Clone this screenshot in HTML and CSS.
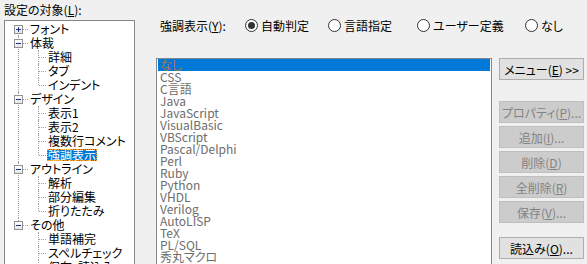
FILE: index.html
```html
<!DOCTYPE html>
<html lang="ja">
<head>
  <meta charset="UTF-8" />
  <title>強調表示</title>
  <link rel="stylesheet" href="styles.css">
</head>
<body>
  <div class="dialog">
    <!-- 左側: 設定の対象ツリー -->
    <div class="targets">
      <div class="caption">設定の対象(<u>L</u>):</div>
      <div class="tree-box">
        <ul class="tree">
          <li class="node first"><div class="row"><span class="toggle plus"></span><span class="label">フォント</span></div></li>
          <li class="node">
            <div class="row"><span class="toggle"></span><span class="label">体裁</span></div>
            <ul class="leaves">
              <li><span class="label">詳細</span></li>
              <li><span class="label">タブ</span></li>
              <li class="last"><span class="label">インデント</span></li>
            </ul>
          </li>
          <li class="node">
            <div class="row"><span class="toggle"></span><span class="label">デザイン</span></div>
            <ul class="leaves">
              <li><span class="label">表示1</span></li>
              <li><span class="label">表示2</span></li>
              <li><span class="label">複数行コメント</span></li>
              <li class="last"><span class="label selected">強調表示</span></li>
            </ul>
          </li>
          <li class="node">
            <div class="row"><span class="toggle"></span><span class="label">アウトライン</span></div>
            <ul class="leaves">
              <li><span class="label">解析</span></li>
              <li><span class="label">部分編集</span></li>
              <li class="last"><span class="label">折りたたみ</span></li>
            </ul>
          </li>
          <li class="node last">
            <div class="row"><span class="toggle"></span><span class="label">その他</span></div>
            <ul class="leaves">
              <li><span class="label">単語補完</span></li>
              <li><span class="label">スペルチェック</span></li>
              <li class="last"><span class="label">保存・読込み</span></li>
            </ul>
          </li>
        </ul>
      </div>
    </div>

    <!-- 右側: 強調表示の設定 -->
    <div class="settings">
      <div class="mode-row">
        <span class="mode-caption">強調表示(<u>Y</u>):</span>
        <label class="radio"><span class="dot checked"></span>自動判定</label>
        <label class="radio"><span class="dot"></span>言語指定</label>
        <label class="radio"><span class="dot"></span>ユーザー定義</label>
        <label class="radio"><span class="dot"></span>なし</label>
      </div>

      <div class="lang-row">
        <ul class="lang-list">
          <li class="selected">なし</li>
          <li>CSS</li>
          <li>C言語</li>
          <li>Java</li>
          <li>JavaScript</li>
          <li>VisualBasic</li>
          <li>VBScript</li>
          <li>Pascal/Delphi</li>
          <li>Perl</li>
          <li>Ruby</li>
          <li>Python</li>
          <li>VHDL</li>
          <li>Verilog</li>
          <li>AutoLISP</li>
          <li>TeX</li>
          <li>PL/SQL</li>
          <li>秀丸マクロ</li>
          <li>HTML</li>
        </ul>

        <div class="buttons">
          <button class="btn menu">メニュー(<u>E</u>) &gt;&gt;</button>
          <button class="btn" disabled>プロパティ(<u>P</u>)...</button>
          <button class="btn" disabled>追加(<u>I</u>)...</button>
          <button class="btn" disabled>削除(<u>D</u>)</button>
          <button class="btn" disabled>全削除(<u>R</u>)</button>
          <button class="btn" disabled>保存(<u>V</u>)...</button>
          <button class="btn load">読込み(<u>O</u>)...</button>
        </div>
      </div>
    </div>
  </div>
</body>
</html>
```

FILE: styles.css
```css
html, body {
  margin: 0;
  height: 264px;
  overflow: hidden;
}
body {
  background: #f0f0f0;
  font-family: "Noto Sans CJK JP", "Noto Sans", sans-serif;
  font-size: 12px;
  color: #000;
  font-feature-settings: "palt";
}
u {
  text-decoration: underline;
  text-underline-offset: 1px;
}
.dialog {
  display: flex;
  padding-left: 4px;
}

/* ツリー */
.targets {
  width: 131px;
}
.caption {
  line-height: 14px;
  margin: 3px 0 3px;
}
.tree-box {
  background: #fff;
  border: 1px solid #828790;
  height: 260px;
  overflow: hidden;
}
.tree,
.leaves {
  list-style: none;
  margin: 0;
}
.tree {
  padding: 1px 0 0 4px;
}
.leaves {
  padding: 0 0 0 20px;
}
.tree li {
  position: relative;
}
.row,
.leaves li {
  display: flex;
  align-items: center;
  height: 14px;
  line-height: 14px;
  white-space: nowrap;
}
/* 縦の点線 */
.node::before,
.leaves li::before {
  content: "";
  position: absolute;
  left: 9px;
  top: 0;
  bottom: 0;
  border-left: 1px dotted #a0a0a0;
}
.node.first::before {
  top: 7px;
}
.node.last::before,
.leaves li.last::before {
  bottom: auto;
  height: 7px;
}
/* 横の点線 */
.row::before,
.leaves li::after {
  content: "";
  position: absolute;
  top: 7px;
  left: 10px;
  width: 9px;
  border-top: 1px dotted #a0a0a0;
}
.leaves li::after {
  width: 7px;
}
.toggle {
  position: absolute;
  left: 5px;
  top: 3px;
  width: 7px;
  height: 7px;
  border: 1px solid #919191;
  background: linear-gradient(#fff, #e6e6e6);
  z-index: 1;
}
.toggle::before {
  content: "";
  position: absolute;
  left: 1px;
  top: 3px;
  width: 5px;
  height: 1px;
  background: #1d2f86;
}
.toggle.plus::after {
  content: "";
  position: absolute;
  left: 3px;
  top: 1px;
  width: 1px;
  height: 5px;
  background: #1d2f86;
}
.row .label {
  margin-left: 20px;
  padding: 0 1px;
}
.leaves .label {
  margin-left: 18px;
  padding: 0 1px;
}
.label.selected {
  background: #0078d7;
  color: #fff;
  line-height: 12px;
  outline: 1px dotted #f0a030;
  outline-offset: -1px;
}

/* 右側 */
.settings {
  margin-left: 21px;
  padding-top: 17px;
  flex: 1;
}
.mode-row {
  display: grid;
  grid-template-columns: 85px 83px 89px 108px auto;
  align-items: center;
  height: 14px;
  padding-left: 4px;
  margin-bottom: 27px;
  white-space: nowrap;
}
.radio {
  display: flex;
  align-items: center;
  gap: 3px;
}
.dot {
  box-sizing: border-box;
  width: 13px;
  height: 13px;
  border: 1px solid #333;
  border-radius: 50%;
  background: #fff;
  display: flex;
  align-items: center;
  justify-content: center;
}
.dot.checked::after {
  content: "";
  width: 7px;
  height: 7px;
  border-radius: 50%;
  background: #333;
}

.lang-row {
  display: flex;
  gap: 7px;
}
.lang-list {
  list-style: none;
  margin: 0;
  padding: 0 1px;
  width: 332px;
  height: 220px;
  background: #fff;
  border: 1px solid #828790;
  color: #6d6d6d;
}
.lang-list li {
  height: 12px;
  line-height: 12px;
  padding-left: 2px;
  white-space: nowrap;
}
.lang-list li.selected {
  background: #0078d7;
  color: #b07a3c;
}

.buttons {
  display: flex;
  flex-direction: column;
  gap: 3px;
  width: 85px;
}
.btn {
  box-sizing: border-box;
  height: 22px;
  padding: 0;
  font: inherit;
  color: #000;
  background: #e1e1e1;
  border: 1px solid #adadad;
  border-radius: 0;
}
.btn:disabled {
  color: #838383;
  background: #cccccc;
  border-color: #bfbfbf;
}
.btn.menu {
  margin-bottom: 18px;
}
.btn.load {
  margin-top: 11px;
}
```
